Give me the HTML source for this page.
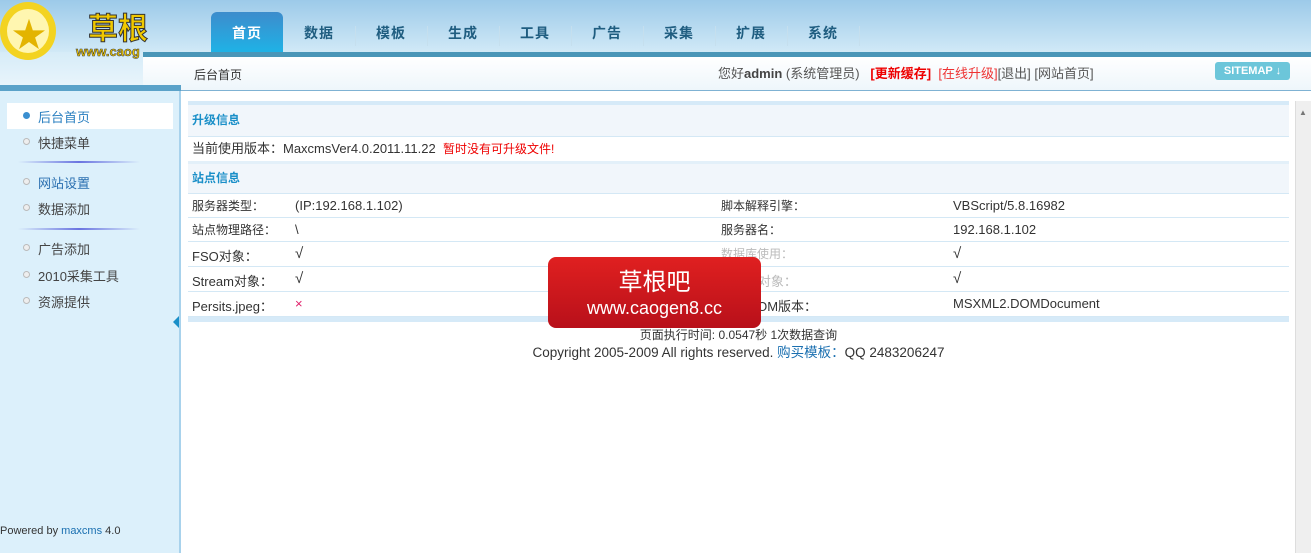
<!DOCTYPE html>
<html><head><meta charset="utf-8"><style>
*{margin:0;padding:0;box-sizing:border-box}
body{width:1311px;height:553px;overflow:hidden;background:#fff;font-family:"Liberation Sans","Noto Sans CJK SC",sans-serif;font-size:12px;color:#333;position:relative}
.abs{position:absolute}
#hdr{left:0;top:0;width:1311px;height:57px;background:linear-gradient(#9ccae9,#d6ecf8)}
#bar{left:143px;top:52px;width:1168px;height:5px;background:#4a96b8}
#sub{left:143px;top:57px;width:1168px;height:34px;background:linear-gradient(#fff,#eef6fb);border-bottom:1px solid #7fb2d3}
#lhead{left:0;top:52px;width:143px;height:33px;background:linear-gradient(#d6ecf8,#e8f4fb)}
#lline{left:0;top:85px;width:181px;height:6px;background:#5ba2c9}
#side{left:0;top:91px;width:181px;height:462px;background:#dcf0fb;border-right:2px solid #a8d2ec}
.tab{top:12px;width:72px;height:40px;text-align:center;line-height:42px;font-size:14px;font-weight:bold;color:#1f5d80;letter-spacing:1px}
.tab.on{background:linear-gradient(#3d8ccc,#1fb2e6);color:#fff;border-radius:6px 6px 0 0}
.sep{top:26px;width:1px;height:20px;background:#c5dfee}
.menu{left:38px;font-size:13px;color:#444}
.dot{left:23px;width:7px;height:7px;border-radius:50%;border:1px solid #bbb;background:#eee}
.hr{left:18px;width:122px;height:2px;background:linear-gradient(90deg,transparent,#6a74e0,transparent)}
.row{left:188px;width:1101px;border-bottom:1px solid #d4e8f5;font-size:13px}
.th{background:#f1f6fb;color:#1a8fc8;font-weight:bold;font-size:12px;padding-left:4px}
.c{position:absolute}
</style></head><body>
<div id="hdr" class="abs"></div>
<div id="bar" class="abs"></div>
<div id="lhead" class="abs"></div>
<div id="sub" class="abs"></div>
<div id="lline" class="abs"></div>
<div id="side" class="abs"></div>
<div class="abs" style="left:0;top:2px;width:56px;height:58px;border:7px solid #f3d321;border-radius:50%;background:#fff6b0"></div>
<div class="abs" style="left:12px;top:8px;color:#e3b400;font-size:34px">★</div>
<div class="abs" style="left:88px;top:8px;font-size:30px;font-weight:bold;color:#f0c800;-webkit-text-stroke:1px #333;font-family:'Noto Sans CJK SC',sans-serif;line-height:36px">草根</div>
<div class="abs" style="left:76px;top:44px;font-size:13px;font-weight:bold;color:#f0c800;-webkit-text-stroke:.5px #333">www.caog</div>
<div class="abs tab on" style="left:211px">首页</div>
<div class="abs tab" style="left:283px">数据</div><div class="abs sep" style="left:355px"></div>
<div class="abs tab" style="left:355px">模板</div><div class="abs sep" style="left:427px"></div>
<div class="abs tab" style="left:427px">生成</div><div class="abs sep" style="left:499px"></div>
<div class="abs tab" style="left:499px">工具</div><div class="abs sep" style="left:571px"></div>
<div class="abs tab" style="left:571px">广告</div><div class="abs sep" style="left:643px"></div>
<div class="abs tab" style="left:643px">采集</div><div class="abs sep" style="left:715px"></div>
<div class="abs tab" style="left:715px">扩展</div><div class="abs sep" style="left:787px"></div>
<div class="abs tab" style="left:787px">系统</div><div class="abs sep" style="left:859px"></div>
<div class="abs" style="left:194px;top:66px;font-size:12px">后台首页</div>
<div class="abs" style="left:718px;top:63px;font-size:13px;color:#555;white-space:nowrap">您好<b style="color:#444">admin</b> (系统管理员) &nbsp; <b style="color:#e00">[更新缓存]</b> &nbsp;<span style="color:#e33">[在线升级]</span>[退出] [网站首页]</div>
<div class="abs" style="left:1215px;top:62px;width:75px;height:18px;background:#6cc6da;border-radius:3px;color:#fff;font-size:11px;font-weight:bold;text-align:center;line-height:18px">SITEMAP ↓</div>
<div class="abs" style="left:7px;top:103px;width:166px;height:26px;background:#fff"></div>
<div class="abs dot" style="top:112px;background:#3a8fd0;border-color:#3a8fd0"></div><div class="abs menu" style="top:107px;color:#2a7fc0">后台首页</div>
<div class="abs dot" style="top:138px"></div><div class="abs menu" style="top:133px">快捷菜单</div>
<div class="abs hr" style="top:161px"></div>
<div class="abs dot" style="top:178px"></div><div class="abs menu" style="top:173px;color:#2a6fb0">网站设置</div>
<div class="abs dot" style="top:204px"></div><div class="abs menu" style="top:199px">数据添加</div>
<div class="abs hr" style="top:228px"></div>
<div class="abs dot" style="top:244px"></div><div class="abs menu" style="top:239px">广告添加</div>
<div class="abs dot" style="top:271px"></div><div class="abs menu" style="top:266px">2010采集工具</div>
<div class="abs dot" style="top:297px"></div><div class="abs menu" style="top:292px">资源提供</div>
<div class="abs" style="left:173px;top:316px;width:0;height:0;border-top:6px solid transparent;border-bottom:6px solid transparent;border-right:6px solid #1a8fc8"></div>
<div class="abs" style="left:0;top:525px;font-size:11px;color:#333">Powered by <span style="color:#1a6fb0">maxcms</span> 4.0</div>
<div class="abs" style="left:1295px;top:101px;width:16px;height:452px;background:#efefef;border-left:1px solid #ddd"></div>
<div class="abs" style="left:1299px;top:108px;font-size:8px;color:#777">▲</div>
<div class="abs" style="left:188px;top:101px;width:1101px;height:4px;background:#d6eaf8"></div>
<div class="abs row th" style="top:105px;height:32px;line-height:30px">升级信息</div>
<div class="abs row" style="top:137px;height:25px;line-height:24px;padding-left:4px">当前使用版本：MaxcmsVer4.0.2011.11.22 &nbsp;<span style="color:#e00;font-size:12px">暂时没有可升级文件!</span></div>
<div class="abs" style="left:188px;top:161px;width:1101px;height:3px;background:#e3f0f9"></div>
<div class="abs row th" style="top:164px;height:30px;line-height:28px">站点信息</div>
<div class="abs row" style="top:194px;height:24px"><span class="c" style="left:4px;top:3px;font-size:12px">服务器类型：</span><span class="c" style="left:107px;top:4px">(IP:192.168.1.102)</span><span class="c" style="left:533px;top:3px;font-size:12px">脚本解释引擎：</span><span class="c" style="left:765px;top:4px">VBScript/5.8.16982</span></div>
<div class="abs row" style="top:218px;height:24px"><span class="c" style="left:4px;top:3px;font-size:12px">站点物理路径：</span><span class="c" style="left:107px;top:4px">\</span><span class="c" style="left:533px;top:3px;font-size:12px">服务器名：</span><span class="c" style="left:765px;top:4px">192.168.1.102</span></div>
<div class="abs row" style="top:242px;height:25px"><span class="c" style="left:4px;top:4px">FSO对象：</span><span class="c" style="left:107px;top:3px;font-size:15px">√</span><span class="c" style="left:533px;top:3px;font-size:12px;color:#bbb">数据库使用：</span><span class="c" style="left:765px;top:3px;font-size:15px">√</span></div>
<div class="abs row" style="top:267px;height:25px"><span class="c" style="left:4px;top:4px">Stream对象：</span><span class="c" style="left:107px;top:3px;font-size:15px">√</span><span class="c" style="left:533px;top:4px;color:#bbb">Binary对象：</span><span class="c" style="left:765px;top:3px;font-size:15px">√</span></div>
<div class="abs row" style="top:292px;height:25px"><span class="c" style="left:4px;top:4px">Persits.jpeg：</span><span class="c" style="left:107px;top:4px;color:#e0206a">×</span><span class="c" style="left:533px;top:4px">XMLDOM版本：</span><span class="c" style="left:765px;top:4px">MSXML2.DOMDocument</span></div>
<div class="abs" style="left:188px;top:317px;width:1101px;height:5px;background:#d6eaf8"></div>
<div class="abs" style="left:188px;top:327px;width:1101px;text-align:center;font-size:12px;line-height:17px">页面执行时间: 0.0547秒 1次数据查询<br><span style="font-size:13.5px">Copyright 2005-2009 All rights reserved. <span style="color:#1a6fb0">购买模板：</span>QQ 2483206247</span></div>
<div class="abs" style="left:548px;top:257px;width:213px;height:71px;background:linear-gradient(#e02020,#b8101a);border-radius:8px;color:#fff;text-align:center;font-family:'Noto Sans CJK SC',sans-serif">
<div style="font-size:24px;line-height:34px;margin-top:6px">草根吧</div>
<div style="font-size:18px;line-height:22px;font-family:'Liberation Sans',sans-serif">www.caogen8.cc</div></div>
</body></html>
